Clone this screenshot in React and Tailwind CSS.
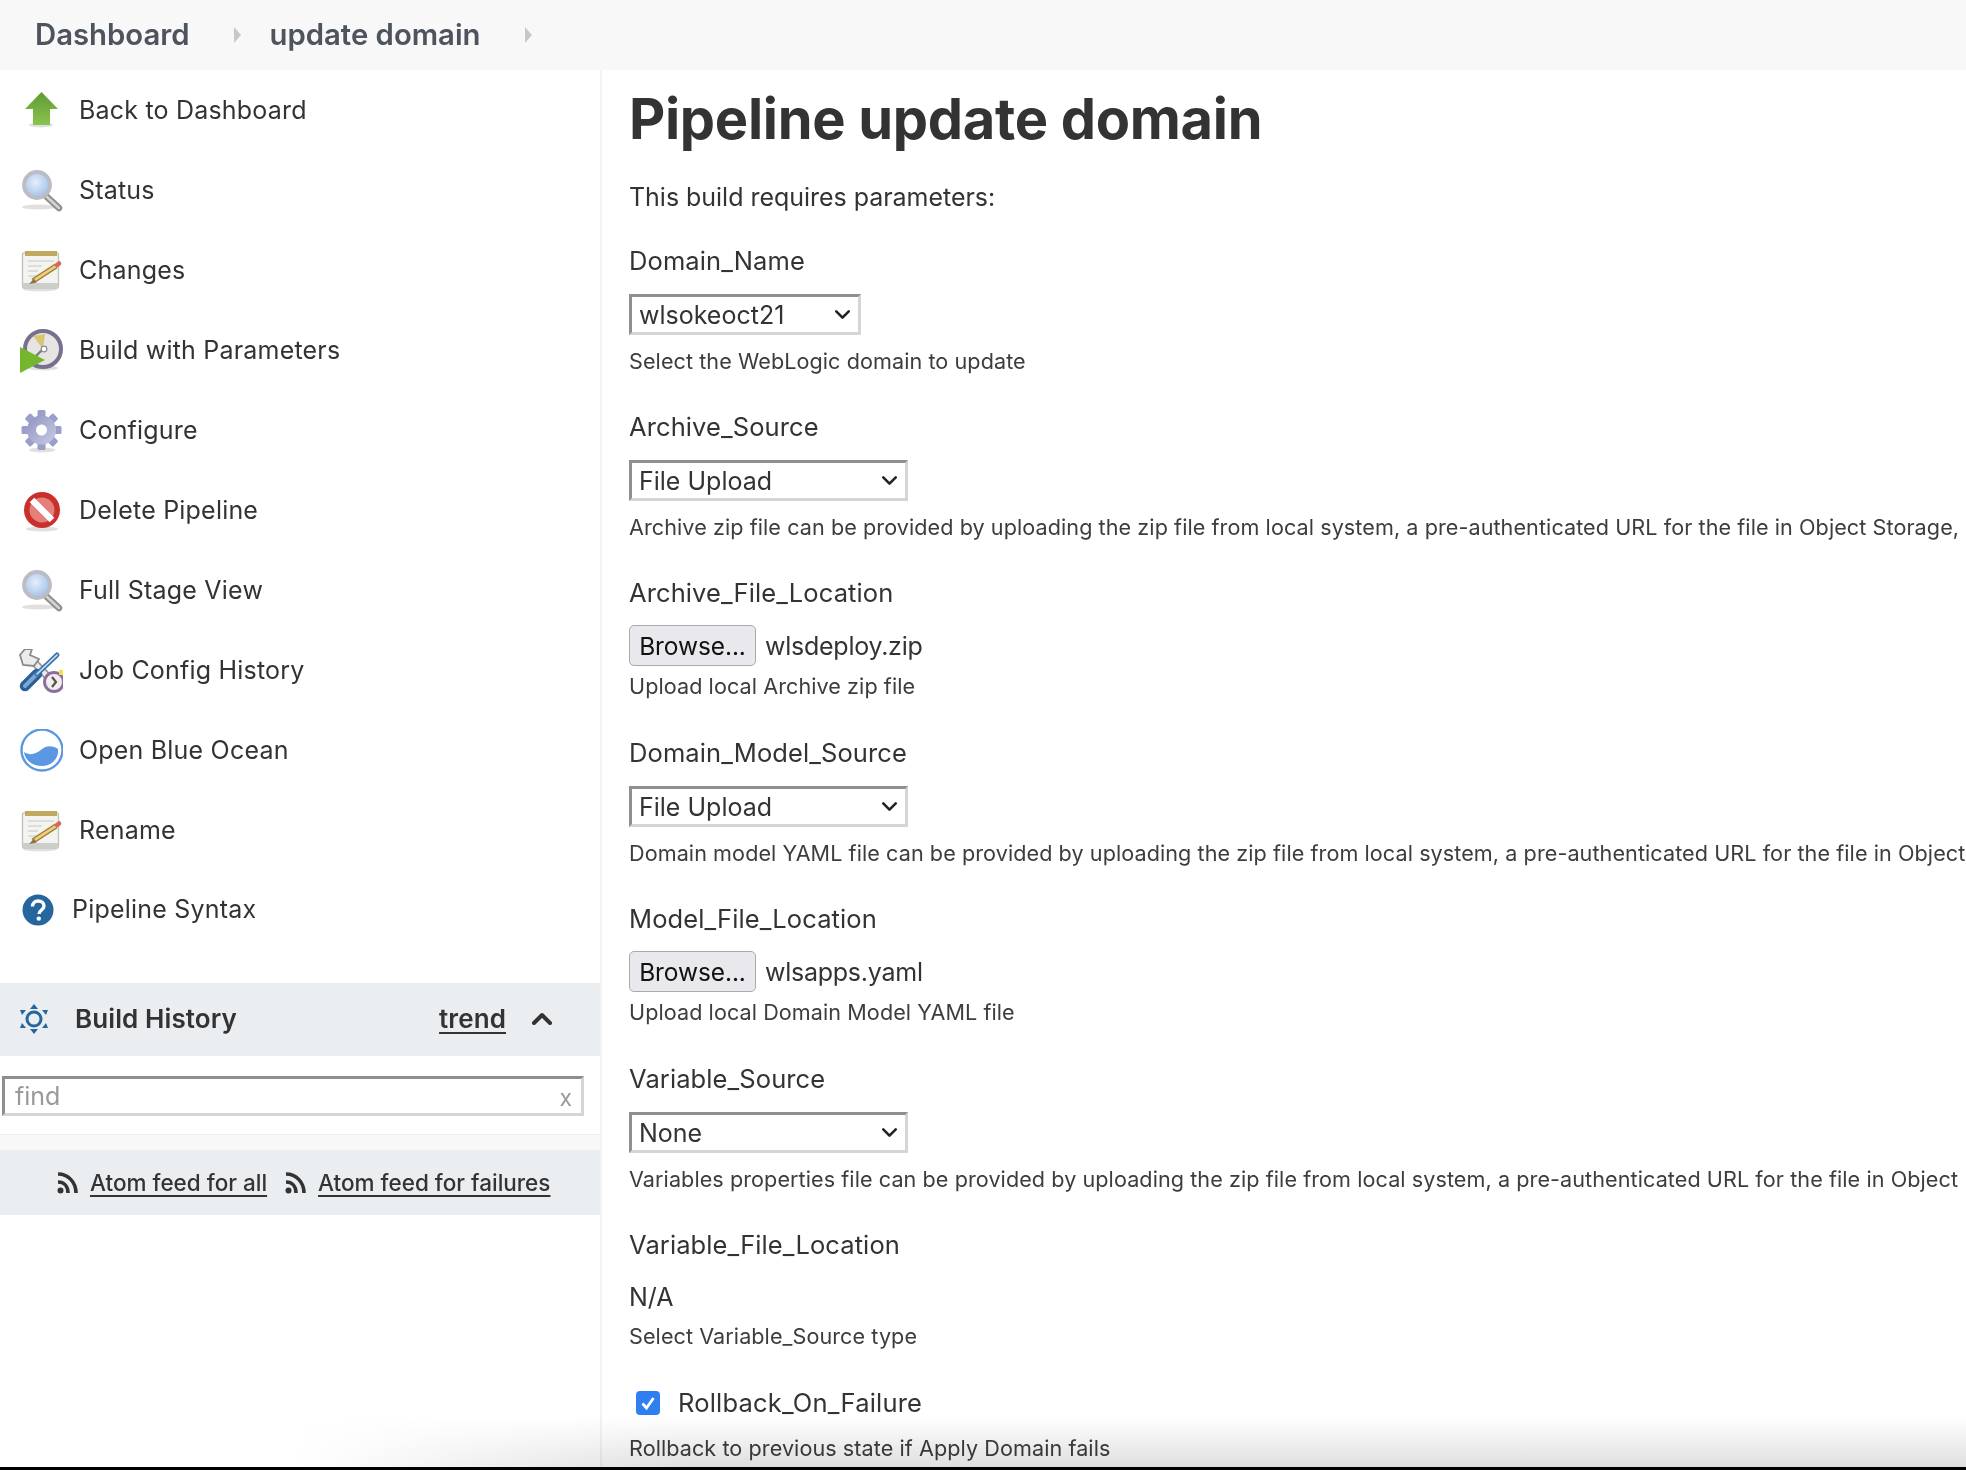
import { ChevronDown, ChevronUp } from "lucide-react"

const FONT = "font-['Inter','Liberation_Sans',sans-serif]"

function Shadow({ cx = 22, cy = 39, rx = 16 }) {
    return <ellipse cx={cx} cy={cy} rx={rx} ry={2.5} fill="#000" opacity="0.12" />
}

function ArrowIcon() {
    return (
        <svg width="44" height="44" viewBox="0 0 44 44" className="blur-[0.4px]">
            <defs>
                <linearGradient id="arrowFill" x1="0" y1="0" x2="0" y2="1">
                    <stop offset="0" stopColor="#5f9a33" />
                    <stop offset="1" stopColor="#8bc34f" />
                </linearGradient>
            </defs>
            <Shadow cy={36} rx={12} />
            <path d="M22.5 3 L39 20 L31 20 L31 36 L14 36 L14 20 L6 20 Z" fill="url(#arrowFill)" />
        </svg>
    )
}

function SearchIcon({ id }) {
    return (
        <svg width="44" height="44" viewBox="0 0 44 44" className="blur-[0.4px]">
            <defs>
                <radialGradient id={id} cx="0.45" cy="0.4" r="0.65">
                    <stop offset="0" stopColor="#e4eefa" />
                    <stop offset="1" stopColor="#9dbde6" />
                </radialGradient>
            </defs>
            <Shadow cx={20} cy={38} rx={17} />
            <path d="M28 28 L40 39" stroke="#8f8f8f" strokeWidth="6.5" strokeLinecap="round" />
            <path d="M28 28 L40 39" stroke="#d4d4d4" strokeWidth="2.5" strokeLinecap="round" />
            <circle cx="18" cy="16" r="13" fill={`url(#${id})`} stroke="#bcbcc4" strokeWidth="3.8" />
        </svg>
    )
}

function NotepadIcon() {
    return (
        <svg width="44" height="44" viewBox="0 0 44 44" className="blur-[0.5px]">
            <Shadow cx={21} cy={40} rx={17} />
            <rect x="3.5" y="4" width="36" height="35" rx="1.5" fill="#f3f3f0" stroke="#c4c4bf" strokeWidth="1.4" />
            <rect x="3.5" y="34" width="36" height="5" fill="#cdcdca" />
            <rect x="6" y="2" width="32" height="5" fill="#bfa95e" />
            <path d="M9 12h26M9 17h14M9 22h10M9 27h8" stroke="#d6d6d6" strokeWidth="1.6" />
            <path d="M14 32 L37 17" stroke="#a98238" strokeWidth="5.5" />
            <path d="M14 32 L37 17" stroke="#f0cf86" strokeWidth="2.6" />
            <path d="M38 16 L40 14.5" stroke="#d8675c" strokeWidth="4.5" strokeLinecap="round" />
            <path d="M10 35 L15 29.5 L17.5 33.5 Z" fill="#8a7444" />
        </svg>
    )
}

function BuildIcon() {
    return (
        <svg width="44" height="44" viewBox="0 0 44 44" className="blur-[0.4px]">
            <Shadow cx={24} cy={39} rx={15} />
            <circle cx="24" cy="20" r="18" fill="#e6e5e3" stroke="#77708f" strokeWidth="4" />
            <path d="M24 20 L14 7 L26 5 Z" fill="#d9c574" />
            <path d="M24 20 L16 28" stroke="#7c7c7c" strokeWidth="2.4" />
            <circle cx="25" cy="20" r="2.8" fill="#fff" stroke="#8c8c8c" strokeWidth="1.2" />
            <path d="M1 18 L26 31 L1 44 Z" fill="#74b72f" />
        </svg>
    )
}

function GearIcon() {
    const teeth = Array.from({ length: 8 }, (_, i) => i * 45)
    return (
        <svg width="44" height="44" viewBox="0 0 44 44" className="blur-[0.5px]">
            <defs>
                <linearGradient id="gearFill" x1="0" y1="0" x2="1" y2="1">
                    <stop offset="0" stopColor="#9094c0" />
                    <stop offset="1" stopColor="#c8cbe6" />
                </linearGradient>
            </defs>
            <Shadow cx={23} cy={41} rx={13} />
            <g>
                {teeth.map((deg) => (
                    <rect key={deg} x="18.5" y="1" width="8" height="12" rx="1.5" fill="#9a9fca" transform={`rotate(${deg} 22.5 21)`} />
                ))}
                <circle cx="22.5" cy="21" r="14.5" fill="url(#gearFill)" />
            </g>
            <circle cx="22.5" cy="21" r="5.5" fill="#fff" />
        </svg>
    )
}

function DeleteIcon() {
    return (
        <svg width="44" height="44" viewBox="0 0 44 44" className="blur-[0.4px]">
            <Shadow cx={23} cy={40} rx={16} />
            <circle cx="23" cy="21" r="18" fill="#c9302c" />
            <circle cx="23" cy="21" r="12.5" fill="#e47f7a" />
            <path d="M13 11 L33 31" stroke="#fff" strokeWidth="6.5" />
        </svg>
    )
}

function ToolsIcon() {
    return (
        <svg width="44" height="44" viewBox="0 0 44 44" className="blur-[0.4px]">
            <path d="M12 10 L31 30" stroke="#9c9c9c" strokeWidth="8" />
            <path d="M12 10 L31 30" stroke="#ececec" strokeWidth="4.5" />
            <path d="M13 0 L6 0 L1 6 L4 16 L15 17 L20 10 L11 6 Z" fill="#ececec" stroke="#8b8b8b" strokeWidth="1.8" />
            <path d="M6 37 L18 25" stroke="#2a5f98" strokeWidth="10.5" strokeLinecap="round" />
            <path d="M6 37 L18 25" stroke="#7ba6d0" strokeWidth="4" strokeLinecap="round" />
            <path d="M18 25 L38 6" stroke="#3c77b0" strokeWidth="5" strokeLinecap="round" />
            <path d="M18 25 L38 6" stroke="#cfe0f0" strokeWidth="1.6" strokeLinecap="round" />
            <circle cx="35" cy="33" r="9.5" fill="#f1eef1" stroke="#8b6f9e" strokeWidth="3" />
            <path d="M33 28 L37 33 L33 38" fill="none" stroke="#5a5040" strokeWidth="2.2" />
            <rect x="40" y="21" width="4" height="5" fill="#f2e04a" />
        </svg>
    )
}

function OceanIcon() {
    return (
        <svg width="44" height="44" viewBox="0 0 44 44">
            <circle cx="23" cy="21" r="20.5" fill="#fff" stroke="#5b97e2" strokeWidth="2.4" />
            <path d="M5 23 C11 27 17 25 23 20 C29 16 34 17 39 20 C40 30 32 37 23 37 C13 37 6 31 5 23 Z" fill="#5b97e2" />
        </svg>
    )
}

function HelpIcon() {
    return (
        <svg width="32" height="32" viewBox="0 0 32 32">
            <circle cx="16" cy="16" r="15.5" fill="#26669e" />
            <path d="M10.5 12.5 C10.5 9 13 7 16 7 C19.5 7 22 9 22 12 C22 16 17 16 17 20" fill="none" stroke="#fff" strokeWidth="3.4" />
            <circle cx="16.8" cy="24.6" r="2.2" fill="#fff" />
        </svg>
    )
}

function HistoryIcon() {
    return (
        <svg width="28" height="30" viewBox="0 0 28 30" fill="#26669e">
            <circle cx="14" cy="15" r="7" fill="none" stroke="#26669e" strokeWidth="3" />
            <path d="M14 0 L18 5 L10 5 Z M14 30 L18 25 L10 25 Z M0 6 L6 6 L2 11 Z M28 6 L22 6 L26 11 Z M0 24 L6 24 L2 19 Z M28 24 L22 24 L26 19 Z" />
        </svg>
    )
}

function FeedIcon() {
    return (
        <svg width="22" height="22" viewBox="0 0 22 22" fill="none" stroke="#333" strokeWidth="3.6">
            <path d="M2 2 C12 2 20 10 20 21" />
            <path d="M2 10 C8 10 12 14 12 21" />
            <circle cx="4.5" cy="18.5" r="3" fill="#333" stroke="none" />
        </svg>
    )
}

const navItems = [
    { label: "Back to Dashboard", icon: <ArrowIcon /> },
    { label: "Status", icon: <SearchIcon id="lensA" /> },
    { label: "Changes", icon: <NotepadIcon /> },
    { label: "Build with Parameters", icon: <BuildIcon /> },
    { label: "Configure", icon: <GearIcon /> },
    { label: "Delete Pipeline", icon: <DeleteIcon /> },
    { label: "Full Stage View", icon: <SearchIcon id="lensB" /> },
    { label: "Job Config History", icon: <ToolsIcon /> },
    { label: "Open Blue Ocean", icon: <OceanIcon /> },
    { label: "Rename", icon: <NotepadIcon /> },
]

function Caret() {
    return <div className="h-0 w-0 border-y-[8px] border-l-[7px] border-y-transparent border-l-[#c4c7cb]" />
}

function Sidebar() {
    return (
        <aside className="w-[602px] shrink-0 border-r-2 border-[#f3f3f3]">
            <nav className="pt-[1px]">
                {navItems.map((item) => (
                    <div key={item.label} className="flex h-[80px] items-center gap-[16px] pl-[19px] text-[25px] tracking-[0.2px] text-[#333]">
                        {item.icon}
                        <span>{item.label}</span>
                    </div>
                ))}
                <div className="flex h-[78px] items-center gap-[18px] pl-[22px] text-[25px] tracking-[0.2px] text-[#333]">
                    <HelpIcon />
                    <span>Pipeline Syntax</span>
                </div>
            </nav>

            <div className="mt-[34px] flex h-[73px] items-center bg-[#ebeef1] pb-[2px] pl-[20px] pr-[42px] text-[26px] font-semibold tracking-[0.1px] text-[#333]">
                <HistoryIcon />
                <span className="ml-[27px]">Build History</span>
                <span className="ml-auto underline underline-offset-4">trend</span>
                <ChevronUp className="ml-[20px] h-[32px] w-[32px]" strokeWidth={3} />
            </div>

            <div className="px-[2px] pt-[20px]">
                <div className="relative w-[582px]">
                    <input
                        placeholder="find"
                        className="h-[40px] w-full border-[3px] border-t-[#8f8f8f] border-l-[#8f8f8f] border-r-[#d5d5d5] border-b-[#d5d5d5] pl-[10px] text-[25px] text-[#333] placeholder:text-[#999]"
                    />
                    <span className="absolute right-[12px] top-[5px] text-[23px] text-[#999]">x</span>
                </div>
            </div>

            <div className="mt-[18px] h-[16px] border-t border-[#eeeeee] bg-[#f8f8f8]" />
            <div className="flex h-[65px] items-center gap-[17px] bg-[#ebeef1] pl-[56px] pt-[1px] text-[22.5px] font-medium text-[#333]">
                <div className="flex items-center gap-[12px]">
                    <FeedIcon />
                    <span className="underline underline-offset-4">Atom feed for all</span>
                </div>
                <div className="flex items-center gap-[12px]">
                    <FeedIcon />
                    <span className="underline underline-offset-4">Atom feed for failures</span>
                </div>
            </div>
        </aside>
    )
}

function Label({ children, className = "" }) {
    return <div className={`h-[32px] text-[25.5px] leading-[32px] tracking-[0.1px] text-[#333] ${className}`}>{children}</div>
}

function Hint({ children }) {
    return <div className="h-[28px] whitespace-nowrap text-[21.6px] leading-[28px] tracking-[0.07px] text-[#3d3d3d]">{children}</div>
}

function SelectField({ label, value, width, hint }) {
    return (
        <div className="h-[166px]">
            <Label>{label}</Label>
            <div className="relative mt-[17px]" style={{ width }}>
                <select
                    defaultValue={value}
                    className="h-[41px] w-full appearance-none border-[3px] border-t-[#8f8f8f] border-l-[#8f8f8f] border-r-[#d5d5d5] border-b-[#d5d5d5] bg-white pl-[7px] text-[25px] text-[#333]"
                >
                    <option>{value}</option>
                </select>
                <ChevronDown className="pointer-events-none absolute right-[6px] top-[8px] h-[25px] w-[25px] text-[#222]" strokeWidth={2.5} />
            </div>
            <div className="mt-[12px]">
                <Hint>{hint}</Hint>
            </div>
        </div>
    )
}

function FileField({ label, file, hint }) {
    return (
        <div className="h-[160px]">
            <Label>{label}</Label>
            <div className="mt-[16px] flex items-center gap-[9px] text-[25px] tracking-[-0.25px] text-[#333]">
                <button className="h-[41px] w-[127px] rounded-[5px] border border-[#a9a9ae] bg-[#e9e9ed] pt-[1px] text-[24.5px] tracking-[-0.1px] text-[#111]">Browse...</button>
                <span className="pt-[2px]">{file}</span>
            </div>
            <div className="mt-[6px]">
                <Hint>{hint}</Hint>
            </div>
        </div>
    )
}

function Content() {
    return (
        <main className="min-w-0 flex-1 overflow-hidden pl-[27px]">
            <h1 className="mt-[14px] h-[70px] text-[56px] leading-[70px] font-bold tracking-[-0.3px] text-[#333]">Pipeline update domain</h1>
            <p className="mt-[27px] h-[32px] text-[25px] leading-[32px] tracking-[-0.03px] text-[#333]">This build requires parameters:</p>
            <div className="mt-[32px]">
                <SelectField label="Domain_Name" value="wlsokeoct21" width={232} hint="Select the WebLogic domain to update" />
                <SelectField
                    label="Archive_Source"
                    value="File Upload"
                    width={279}
                    hint="Archive zip file can be provided by uploading the zip file from local system, a pre-authenticated URL for the file in Object Storage,"
                />
                <FileField label="Archive_File_Location" file="wlsdeploy.zip" hint="Upload local Archive zip file" />
                <SelectField
                    label="Domain_Model_Source"
                    value="File Upload"
                    width={279}
                    hint="Domain model YAML file can be provided by uploading the zip file from local system, a pre-authenticated URL for the file in Object"
                />
                <FileField label="Model_File_Location" file="wlsapps.yaml" hint="Upload local Domain Model YAML file" />
                <SelectField
                    label="Variable_Source"
                    value="None"
                    width={279}
                    hint="Variables properties file can be provided by uploading the zip file from local system, a pre-authenticated URL for the file in Object"
                />
                <Label>Variable_File_Location</Label>
                <div className="mt-[20px] h-[32px] text-[25px] leading-[32px] text-[#333]">N/A</div>
                <div className="mt-[9px]">
                    <Hint>Select Variable_Source type</Hint>
                </div>
                <div className="mt-[37px] flex h-[32px] items-center gap-[18px] pl-[7px]">
                    <div className="flex h-[24px] w-[24px] items-center justify-center rounded-[4px] bg-[#2f7ff0]">
                        <svg width="16" height="16" viewBox="0 0 16 16">
                            <path d="M2.5 8.5 L6.5 13 L13.5 3" fill="none" stroke="#fff" strokeWidth="2.8" />
                        </svg>
                    </div>
                    <span className="text-[25.5px] leading-[32px] tracking-[0.2px] text-[#333]">Rollback_On_Failure</span>
                </div>
                <div className="mt-[15px]">
                    <Hint>Rollback to previous state if Apply Domain fails</Hint>
                </div>
            </div>
        </main>
    )
}

export default function App() {
    return (
        <div className={`relative flex h-[1470px] w-[1966px] flex-col overflow-hidden bg-white ${FONT}`}>
            <header className="flex h-[70px] shrink-0 items-center bg-[#f8f8f8] pl-[35px] text-[29.3px] font-semibold text-[#4d545d]">
                <span>Dashboard</span>
                <div className="ml-[44px]"><Caret /></div>
                <span className="ml-[29px]">update domain</span>
                <div className="ml-[44px]"><Caret /></div>
            </header>
            <div className="flex min-h-0 flex-1">
                <Sidebar />
                <Content />
            </div>
            {/* window shadow along the bottom edge of the capture */}
            <div className="pointer-events-none absolute inset-x-0 bottom-[3px] h-[50px] bg-gradient-to-b from-transparent to-[#dfdfdf] mix-blend-multiply [mask-image:linear-gradient(to_right,transparent_15%,black_35%)]" />
            <div className="absolute inset-x-0 bottom-0 h-[3px] bg-black" />
        </div>
    )
}
